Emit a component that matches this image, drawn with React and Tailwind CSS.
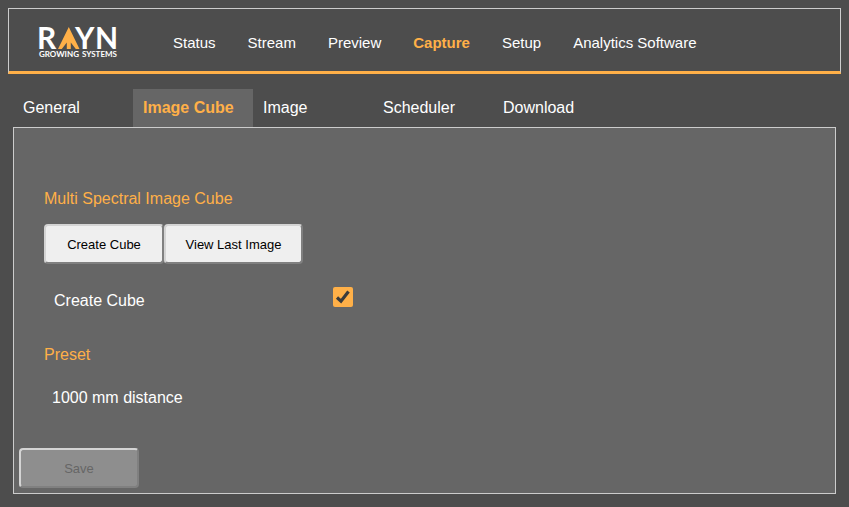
import { useState } from "react";

const NAV = ["Status", "Stream", "Preview", "Capture", "Setup", "Analytics Software"];
const TABS = ["General", "Image Cube", "Image", "Scheduler", "Download"];

function Logo() {
  return (
    <svg
      width="80"
      height="44"
      viewBox="0 0 80 44"
      className="overflow-visible"
      role="img"
      aria-label="RAYN Growing Systems"
    >
      <g fill="#fff" fontFamily="Lato, sans-serif" fontWeight="700">
        <text x="-2" y="28" fontSize="30">R</text>
        <text x="36" y="28" fontSize="30">Y</text>
        <text x="56" y="28" fontSize="30">N</text>
        <text x="0" y="36" fontSize="8">GROWING</text>
        <text x="43" y="36" fontSize="8">SYSTEMS</text>
      </g>
      <path
        fill="#ffb048"
        d="M29.8 6 L40.5 28 H36.8 L31.8 21.5 V28 H27.8 V21.5 L22.8 28 H19 Z"
      />
    </svg>
  );
}

function Header() {
  return (
    <header className="flex h-[66px] items-center border border-b-[3px] border-[#ccc] border-b-[#ffb048] pt-1.5 pl-[30px]">
      <a href="#home">
        <Logo />
      </a>
      <nav className="ml-[54px] flex gap-8 text-[15px] leading-5 whitespace-nowrap">
        {NAV.map((item) => (
          <a key={item} href="#nav" className={item === "Capture" ? "font-bold text-[#ffb048]" : ""}>
            {item}
          </a>
        ))}
      </nav>
    </header>
  );
}

function Tabs() {
  return (
    <div role="tablist" className="flex">
      {TABS.map((tab) => (
        <button
          key={tab}
          type="button"
          role="tab"
          aria-selected={tab === "Image Cube"}
          className={`h-[38px] w-[120px] px-[10px] text-left whitespace-nowrap ${
            tab === "Image Cube" ? "bg-[#666] font-bold text-[#ffb048]" : ""
          }`}
        >
          {tab}
        </button>
      ))}
    </div>
  );
}

const BUTTON =
  "h-10 rounded border-2 border-t-[#d4d4d4] border-l-[#d4d4d4] border-r-[#808080] border-b-[#808080] pt-0.5 text-[13px]";

export default function App() {
  const [createCube, setCreateCube] = useState(true);

  return (
    <div className="min-h-screen bg-[#4d4d4d] p-2 font-['Liberation_Sans',Arial,sans-serif] text-base leading-5 text-white">
      <Header />
      <main className="mx-[5px] mt-[15px]">
        <Tabs />
        <section className="border border-[#ccc] bg-[#666] px-[5px] pt-[61px] pb-[5px]">
          <div className="px-[25px]">
            <h2 className="text-[#ffb048]">Multi Spectral Image Cube</h2>
            <div className="mt-[15px] flex">
              <button type="button" className={`${BUTTON} w-[120px] bg-[#efefef] text-black`}>
                Create Cube
              </button>
              <button type="button" className={`${BUTTON} w-[139px] bg-[#efefef] text-black`}>
                View Last Image
              </button>
            </div>
            <div className="mt-[23px] flex items-start">
              <label htmlFor="create-cube" className="mt-1 w-[289px] pl-[10px]">
                Create Cube
              </label>
              <span className="grid">
                <input
                  id="create-cube"
                  type="checkbox"
                  checked={createCube}
                  onChange={(e) => setCreateCube(e.target.checked)}
                  className="peer col-start-1 row-start-1 size-5 appearance-none rounded-xs bg-white checked:bg-[#ffb048]"
                />
                <svg
                  viewBox="0 0 20 20"
                  className="pointer-events-none invisible col-start-1 row-start-1 size-5 peer-checked:visible"
                  aria-hidden="true"
                >
                  <path d="M4 10.5 L8 14.2 L15.5 4.5" fill="none" stroke="#3b3b3b" strokeWidth="3.2" />
                </svg>
              </span>
            </div>
            <h2 className="mt-[34px] text-[#ffb048]">Preset</h2>
            <p className="mt-[23px] pl-2">1000 mm distance</p>
          </div>
          <button type="button" disabled className={`${BUTTON} mt-10 w-[120px] bg-[#8e8e8e] text-[#666]`}>
            Save
          </button>
        </section>
      </main>
    </div>
  );
}
